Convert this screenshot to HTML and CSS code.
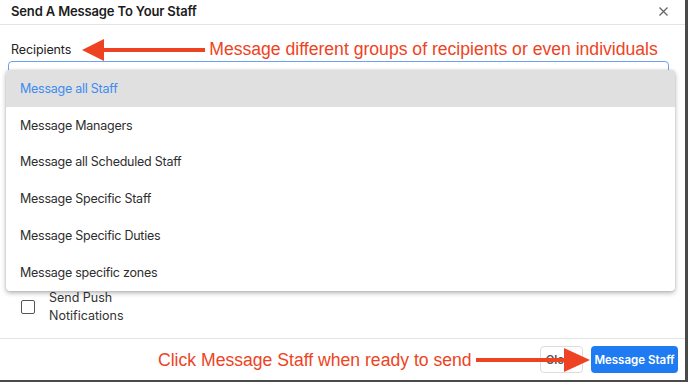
FILE: index.html
```html
<!DOCTYPE html>
<html>
<head>
<meta charset="utf-8">
<link rel="stylesheet" href="styles.css">
</head>
<body>
<div class="modal">
  <div class="header">
    <span class="title">Send A Message To Your Staff</span>
    <svg class="close" width="9" height="9" viewBox="0 0 9 9"><path d="M0.5 0.5L8.5 8.5M8.5 0.5L0.5 8.5" stroke="#666" stroke-width="1.3"/></svg>
  </div>
  <div class="content">
    <div class="label-row">
      <span class="label">Recipients</span>
      <svg class="arrow-left" width="123" height="22" viewBox="0 0 123 22"><rect x="18" y="9" width="105" height="4" fill="#ee4323"/><polygon points="0,11 22,0 22,22" fill="#ee4323"/></svg>
      <span class="note">Message different groups of recipients or even individuals</span>
    </div>
    <div class="select"></div>
    <div class="spacer"></div>
    <label class="check-row">
      <span class="checkbox"></span>
      <span class="check-label">Send Push<br>Notifications</span>
    </label>
    <div class="menu">
      <div class="item active">Message all Staff</div>
      <div class="item">Message Managers</div>
      <div class="item">Message all Scheduled Staff</div>
      <div class="item">Message Specific Staff</div>
      <div class="item">Message Specific Duties</div>
      <div class="item">Message specific zones</div>
    </div>
  </div>
  <div class="footer">
    <span class="note footnote">Click Message Staff when ready to send</span>
    <button class="btn btn-close">Close</button>
    <button class="btn btn-primary">Message Staff</button>
    <svg class="arrow-right" width="114" height="26" viewBox="0 0 114 26"><rect x="0" y="11" width="92" height="4" fill="#ee4323"/><polygon points="114,13 88,1 88,25" fill="#ee4323"/></svg>
  </div>
</div>
</body>
</html>
```

FILE: styles.css
```css
html, body {
  margin: 0;
  padding: 0;
}
body {
  width: 688px;
  height: 382px;
  background: #4a4a4a;
  font-family: Inter, "Noto Sans", sans-serif;
  overflow: hidden;
}
.modal {
  width: 685px;
  height: 380px;
  background: #fff;
  position: relative;
  display: flex;
  flex-direction: column;
}
.header {
  height: 24px;
  border-bottom: 1.5px solid #e4e4e4;
  display: flex;
  align-items: center;
  justify-content: space-between;
  padding: 0 17px 0 11px;
}
.title {
  font-size: 13px;
  font-weight: 600;
  color: #1c1c1c;
  letter-spacing: -0.15px;
  margin-top: -2px;
}
.close {
  margin-top: -2px;
}
.content {
  flex: 1;
  position: relative;
  padding: 14px 16px 0 8px;
}
.label-row {
  display: flex;
  align-items: center;
  height: 20px;
}
.label {
  font-size: 12.5px;
  color: #222;
  margin-left: 3px;
  letter-spacing: -0.1px;
}
.arrow-left {
  margin-left: 11px;
  margin-top: 1px;
  flex: none;
}
.note {
  font-family: "Liberation Sans", Arial, sans-serif;
  font-size: 17.6px;
  color: #ee4323;
  white-space: nowrap;
}
.label-row .note {
  margin-left: 4px;
}
.select {
  margin-top: 2px;
  height: 30px;
  border: 1px solid #6aa3f5;
  border-radius: 4px;
  width: 659px;
}
.spacer {
  height: 200px;
}
.check-row {
  display: flex;
  align-items: center;
  padding-left: 13px;
  margin-top: -4px;
}
.checkbox {
  width: 12px;
  height: 12px;
  border: 1.5px solid #555;
  border-radius: 2px;
}
.check-label {
  margin-left: 14px;
  font-size: 12.5px;
  line-height: 18px;
  color: #333;
}
.menu {
  position: absolute;
  left: 6px;
  top: 45px;
  width: 669px;
  background: #fff;
  border-radius: 4px;
  box-shadow: 0 2px 5px rgba(0,0,0,0.3), 0 0 2px rgba(0,0,0,0.12);
  overflow: hidden;
}
.item {
  height: 36.8px;
  display: flex;
  align-items: center;
  padding-left: 14px;
  font-size: 12.5px;
  color: #2e2e2e;
  letter-spacing: -0.25px;
}
.item.active {
  background: #e0e0e0;
  color: #3d8bf2;
}
.footer {
  height: 41px;
  border-top: 1.5px solid #e4e4e4;
  display: flex;
  align-items: center;
  justify-content: flex-end;
  padding: 0 7px 0 0;
  position: relative;
}
.footnote {
  margin-right: auto;
  margin-left: 158px;
  margin-top: 2px;
}
.btn {
  height: 27px;
  border-radius: 4px;
  font-family: Inter, "Noto Sans", sans-serif;
  font-size: 11.5px;
  font-weight: 600;
  padding: 0;
  white-space: nowrap;
}
.btn-close {
  background: #fff;
  border: 1px solid #ddd;
  color: #555;
  width: 43px;
  margin-right: 8px;
}
.btn-primary {
  background: #1f7bf2;
  border: none;
  color: #fff;
  width: 87px;
}
.arrow-right {
  position: absolute;
  left: 476px;
  top: 8px;
}
```
